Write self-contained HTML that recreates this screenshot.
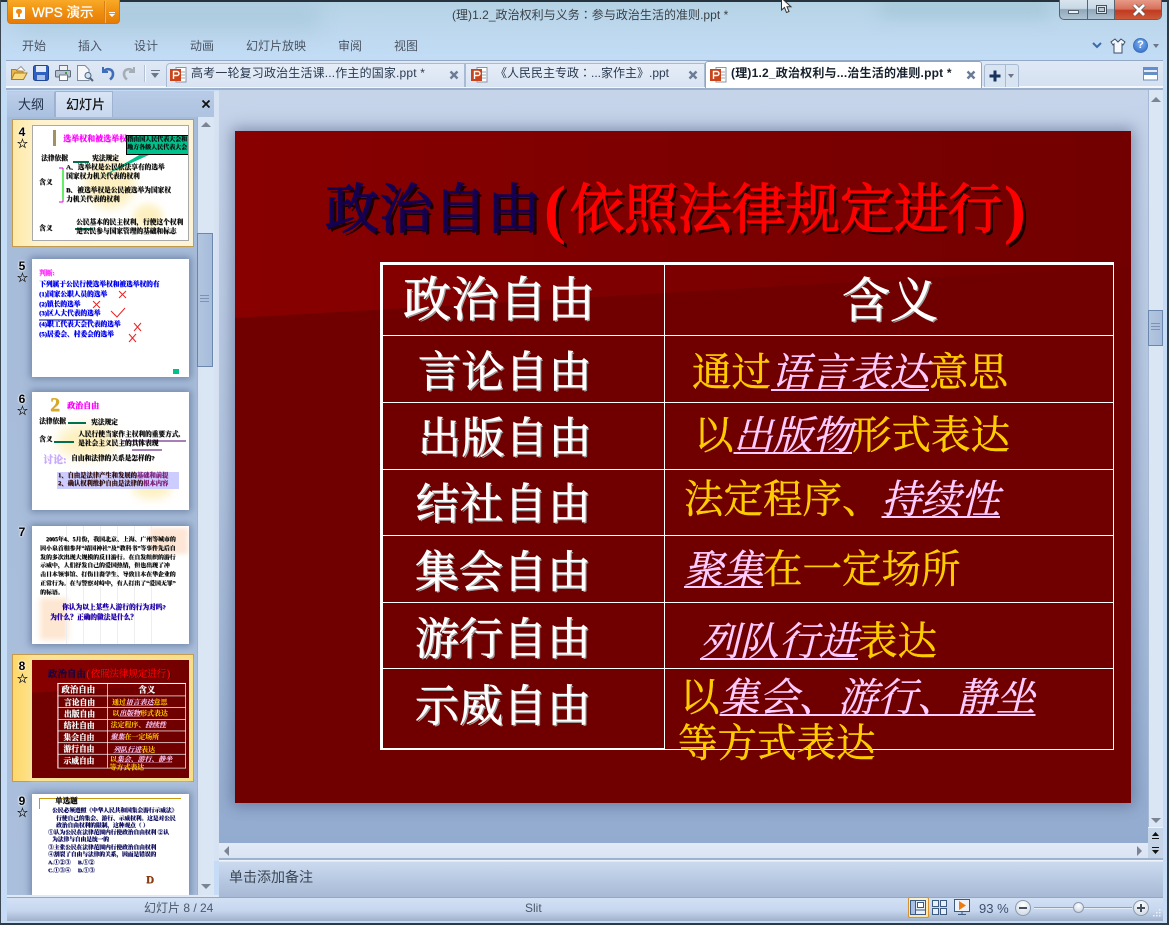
<!DOCTYPE html>
<html><head><meta charset="utf-8"><style>
html,body{margin:0;padding:0}
body{width:1169px;height:925px;overflow:hidden;position:relative;background:#bcd6ec;font-family:"Liberation Sans","Noto Sans CJK SC",sans-serif;font-size:12px;color:#333}
div,span.a,svg.a{position:absolute}
.t{position:absolute;white-space:nowrap;line-height:1}
.rib{top:40px;color:#4b5563;font-size:12px}
.doc{top:67px;font-size:12px;color:#2a3a50;letter-spacing:.1px;font-family:"Liberation Sans","Noto Sans CJK TC",sans-serif}
.slide{position:absolute;width:896px;height:672px;background:#700000;overflow:hidden;font-family:"Liberation Serif","Noto Serif CJK SC",serif}
.slide .l{position:absolute;background:#fff}
.slide .tt{font-size:54px;font-weight:400;-webkit-text-stroke:1.3px currentColor;text-shadow:3px 3px 0 #1c0000}
.slide .pp{font-size:66px;font-weight:bold;color:#f00;text-shadow:3px 3px 0 #1c0000}
.lab{color:#fff;font-weight:400;-webkit-text-stroke:.7px #fff;text-shadow:1.500px 1.500px 0 #a0a0a0}
.yel{color:#ffcc00;font-size:39.5px;-webkit-text-stroke:.4px currentColor}
.yel i{color:#ffccff;text-decoration:underline;text-decoration-thickness:2px;text-underline-offset:3px}
.thumb{position:absolute;left:32px;width:157px;height:118px;background:#fff;box-shadow:0 0 7px 2px rgba(70,90,130,.55);overflow:hidden}
.thumb>.t{font-weight:bold;font-size:6.700px;color:#111;font-family:"Liberation Serif","Noto Serif CJK SC",serif;text-shadow:.4px .3px 0 currentColor}
.num{position:absolute;left:16px;width:12px;text-align:center;font:bold 11px/12px "Liberation Sans",sans-serif;color:#000;text-shadow:0 0 2px #fff,0 0 2px #fff}
.star{position:absolute;left:16px;width:13px;text-align:center;font:13px/13px "DejaVu Sans",sans-serif;color:#111;-webkit-text-stroke:.3px #111;text-shadow:0 0 1px #fff}
.sel{position:absolute;left:12px;width:182px;box-sizing:border-box;border:1px solid #c39a4e}
</style></head><body>

<!-- window chrome -->
<div style="left:0;top:0;width:1169px;height:925px;background:linear-gradient(180deg,#b5d2e4 0,#bcd7ec 25px,#c3dcf6 58px,#c6dcf6 100%)"></div>
<div style="left:20px;top:2px;width:300px;height:30px;background:rgba(150,185,205,.35);filter:blur(10px)"></div>
<div style="left:880px;top:0;width:170px;height:18px;background:rgba(150,190,205,.5);filter:blur(8px)"></div>
<div style="left:0;top:0;width:1169px;height:2px;background:#27333c"></div>
<div style="left:0;top:0;width:1px;height:925px;background:#3a4650"></div>
<div style="left:1167px;top:0;width:2px;height:925px;background:#2e3a44"></div>
<div style="left:0;top:923px;width:1169px;height:2px;background:#2e3a44"></div>

<!-- WPS button -->
<div style="left:7px;top:0;width:113px;height:24px;border-radius:0 0 4px 4px;background:linear-gradient(#f9a928,#f09010 50%,#e67c06);border:1px solid #c9772a;border-top:0;box-sizing:border-box"></div>
<div style="left:13px;top:7px;width:12px;height:12px;background:#fff"></div>
<div style="left:16px;top:9px;width:6px;height:5px;background:#ee8b10;border-radius:3px"></div>
<div style="left:18px;top:13px;width:2px;height:4px;background:#ee8b10"></div>
<div class="t" style="left:32px;top:6px;color:#fff;font-size:13.500px;-webkit-text-stroke:.3px #fff">WPS 演示</div>
<div style="left:104px;top:1px;width:1px;height:22px;background:#d58018;border-right:1px solid #f7b558"></div>
<div style="left:109px;top:12px;width:6px;height:1px;background:#fff"></div>
<div style="left:109px;top:14px;border:3px solid transparent;border-top:3px solid #fff;border-bottom:0"></div>

<div class="t" style="left:452px;top:9px;font-size:12px;color:#3a3f46;letter-spacing:.03px;font-family:'Liberation Sans','Noto Sans CJK TC',sans-serif">(理)1.2_政治权利与义务：参与政治生活的准则.ppt *</div>

<!-- cursor -->
<svg class="a" style="left:780px;top:0" width="14" height="14"><path d="M1.500 -2V10L4.500 7.500L6.500 12.500L9 11.500L7 6.800H11Z" fill="#fff" stroke="#333" stroke-width="1"/></svg>

<!-- window buttons -->
<div style="left:1059px;top:0;width:103px;height:20px;border:1px solid #59636e;border-top:0;border-radius:0 0 5px 5px;box-sizing:border-box;background:linear-gradient(#d8e4ee,#c8d8e6 45%,#8fa7ba 50%,#aec4d4);overflow:hidden">
<div style="left:27px;top:0;width:1px;height:20px;background:#59636e"></div>
<div style="left:54px;top:0;width:1px;height:20px;background:#59636e"></div>
<div style="left:55px;top:0;width:47px;height:20px;background:linear-gradient(#e79a88,#d8705a 45%,#c03a20 52%,#cf5c3c)"></div>
</div>
<div style="left:1068px;top:10px;width:11px;height:4px;background:#e9f0f6;border:1px solid #56636f;box-sizing:border-box"></div>
<div style="left:1096px;top:5px;width:11px;height:9px;border:1px solid #46525e;box-sizing:border-box;background:#dfe8ef"></div>
<div style="left:1098px;top:7px;width:7px;height:5px;border:1px solid #46525e;box-sizing:border-box;background:#b9c9d6"></div>
<svg class="a" style="left:1132px;top:4px" width="14" height="12"><path d="M2 1L12 11M12 1L2 11" stroke="#555" stroke-width="4.200"/><path d="M2 1L12 11M12 1L2 11" stroke="#fff" stroke-width="2.800"/></svg>

<!-- ribbon tabs -->
<div class="t rib" style="left:22px">开始</div>
<div class="t rib" style="left:78px">插入</div>
<div class="t rib" style="left:134px">设计</div>
<div class="t rib" style="left:190px">动画</div>
<div class="t rib" style="left:246px">幻灯片放映</div>
<div class="t rib" style="left:338px">审阅</div>
<div class="t rib" style="left:394px">视图</div>
<svg class="a" style="left:1091px;top:41px" width="12" height="9"><path d="M2 2L6 6L10 2" stroke="#3c6aa8" stroke-width="2" fill="none"/></svg>
<svg class="a" style="left:1110px;top:38px" width="16" height="16"><path d="M5 1L1 4L3 7L4 6V15H12V6L13 7L15 4L11 1L8 4Z" fill="#f4f7fb" stroke="#3a4f6c" stroke-width="1"/></svg>
<div style="left:1133px;top:38px;width:13px;height:13px;border-radius:50%;background:radial-gradient(circle at 50% 35%,#7fb0ee,#2a68c8);border:1px solid #3d72bb;color:#fff;font:bold 11px/13px 'Liberation Sans';text-align:center">?</div>
<div style="left:1153px;top:44px;border:3px solid transparent;border-top:4px solid #6a7686;border-bottom:0"></div>

<!-- toolbar / tab strip -->
<div style="left:6px;top:60px;width:1157px;height:30px;box-sizing:border-box;background:linear-gradient(#dfe8f5,#d4e0f0);border-top:1px solid #92a8c6;border-bottom:2px solid #9cb0cc"></div>
<div style="left:6px;top:86px;width:1157px;height:2px;background:#f4f7fc"></div>
<svg class="a" style="left:10px;top:65px" width="18" height="16"><path d="M1.500 14.500V4.500H6L7 6H13V14.500Z" fill="#e8b64c" stroke="#a97f22"/><path d="M1.500 14.500L4.500 8H17L13.500 14.500Z" fill="#f8d97d" stroke="#a97f22"/><path d="M7 5L11 1.500L15 6" fill="#fff" stroke="#999"/></svg>
<svg class="a" style="left:33px;top:65px" width="17" height="16"><rect x=".5" y=".5" width="15" height="15" rx="2" fill="#2f62c0" stroke="#1e4696"/><rect x="3" y="1" width="10" height="6" fill="#dfe9f8"/><rect x="4" y="10" width="8" height="5" fill="#a9c0e8"/></svg>
<svg class="a" style="left:55px;top:65px" width="17" height="16"><rect x="4.500" y=".5" width="8" height="5" fill="#eef2f7" stroke="#6b7787"/><rect x=".5" y="5.500" width="15" height="6.500" rx="1" fill="#b7c3d2" stroke="#5d6a7a"/><rect x="4.500" y="10" width="8" height="5.500" fill="#fff" stroke="#6b7787"/><rect x="10" y="7" width="2" height="2" fill="#3aa03a"/></svg>
<svg class="a" style="left:77px;top:65px" width="17" height="17"><path d="M.5 .5H8L12 4.500V15.500H.5Z" fill="#f4f6fa" stroke="#7f8b9b"/><circle cx="11" cy="10.500" r="3" fill="#cfe2f5" stroke="#51647c"/><path d="M13 13L16 16" stroke="#51647c" stroke-width="2"/></svg>
<svg class="a" style="left:100px;top:65px" width="15" height="16"><path d="M3 2V7H8" fill="none" stroke="#3e6eb8" stroke-width="2"/><path d="M3.500 6.500C7 2.500 13 4 13 9C13 11 12 13 10 14.500" fill="none" stroke="#3e6eb8" stroke-width="2.600"/></svg>
<svg class="a" style="left:122px;top:65px" width="15" height="16"><path d="M12 2V7H7" fill="none" stroke="#a6aeb5" stroke-width="2"/><path d="M11.500 6.500C8 2.500 2 4 2 9C2 11 3 13 5 14.500" fill="none" stroke="#a6aeb5" stroke-width="2.600"/></svg>
<div style="left:144px;top:65px;width:1px;height:17px;background:#b5c2d4;border-right:1px solid #f5f8fc"></div>
<div style="left:151px;top:70px;width:9px;height:1px;background:#6b7686"></div>
<div style="left:151px;top:73px;border:4px solid transparent;border-top:5px solid #6b7686;border-bottom:0;border-left-width:4.500px;border-right-width:4.500px"></div>

<!-- doc tabs -->
<div style="left:166px;top:63px;width:299px;height:24px;box-sizing:border-box;border:1px solid #a9bbd3;border-bottom:0;border-radius:4px 0 0 0;background:linear-gradient(#e6edf8,#d8e3f2)"></div>
<div style="left:465px;top:63px;width:240px;height:24px;box-sizing:border-box;border:1px solid #a9bbd3;border-bottom:0;background:linear-gradient(#e6edf8,#d8e3f2)"></div>
<div style="left:705px;top:61px;width:277px;height:27px;box-sizing:border-box;border:1px solid #8ea6c6;border-bottom:0;border-radius:3px 3px 0 0;background:#fff"></div>
<div style="left:984px;top:64px;width:35px;height:23px;box-sizing:border-box;border:1px solid #a9bbd3;border-bottom:0;border-radius:3px 3px 0 0;background:#d9e4f3"></div>
<div style="left:1005px;top:65px;width:1px;height:22px;background:#a9bbd3"></div>
<!-- p icons -->
<svg class="a" style="left:170px;top:67px" width="17" height="16"><rect x="6" y=".5" width="10" height="14.500" fill="#fff" stroke="#8a94a2"/><path d="M11 5H15M11 8H15M11 11H15" stroke="#9aa5b3"/><rect x="0" y="2" width="11" height="12" fill="#c9441a"/><path d="M3.500 12V4.500H7A2 2 0 0 1 7 8.500H3.500" fill="none" stroke="#fff" stroke-width="1.400"/></svg>
<svg class="a" style="left:471px;top:67px" width="17" height="16"><rect x="6" y=".5" width="10" height="14.500" fill="#fff" stroke="#8a94a2"/><path d="M11 5H15M11 8H15M11 11H15" stroke="#9aa5b3"/><rect x="0" y="2" width="11" height="12" fill="#c9441a"/><path d="M3.500 12V4.500H7A2 2 0 0 1 7 8.500H3.500" fill="none" stroke="#fff" stroke-width="1.400"/></svg>
<svg class="a" style="left:710px;top:67px" width="17" height="16"><rect x="6" y=".5" width="10" height="14.500" fill="#fff" stroke="#8a94a2"/><path d="M11 5H15M11 8H15M11 11H15" stroke="#9aa5b3"/><rect x="0" y="2" width="11" height="12" fill="#c9441a"/><path d="M3.500 12V4.500H7A2 2 0 0 1 7 8.500H3.500" fill="none" stroke="#fff" stroke-width="1.400"/></svg>
<div class="t doc" style="left:191px;letter-spacing:.16px">高考一轮复习政治生活课...作主的国家.ppt *</div>
<div class="t doc" style="left:495px;letter-spacing:0">《人民民主专政：...家作主》.ppt</div>
<div class="t doc" style="left:731px;font-weight:bold;color:#16202c;letter-spacing:.2px">(理)1.2_政治权利与...治生活的准则.ppt *</div>
<svg class="a" style="left:449px;top:70px" width="10" height="10"><path d="M1.500 1.500L8.500 8.500M8.500 1.500L1.500 8.500" stroke="#6b7c96" stroke-width="2.400"/></svg>
<svg class="a" style="left:688px;top:70px" width="10" height="10"><path d="M1.500 1.500L8.500 8.500M8.500 1.500L1.500 8.500" stroke="#6b7c96" stroke-width="2.400"/></svg>
<svg class="a" style="left:966px;top:70px" width="10" height="10"><path d="M1.500 1.500L8.500 8.500M8.500 1.500L1.500 8.500" stroke="#6b7c96" stroke-width="2.400"/></svg>
<svg class="a" style="left:988px;top:69px" width="14" height="14"><path d="M7 1.500V12.500M1.500 7H12.500" stroke="#17345f" stroke-width="3"/></svg>
<div style="left:1008px;top:74px;border:3px solid transparent;border-top:4px solid #6b7686;border-bottom:0"></div>
<svg class="a" style="left:1143px;top:67px" width="16" height="14"><rect x=".5" y=".5" width="14" height="7" fill="#e5edf8" stroke="#6f8db6"/><rect x=".5" y="1" width="14" height="2" fill="#5f8fd0"/><rect x=".5" y="5.500" width="14" height="7.500" fill="#fff" stroke="#6f8db6"/><rect x="1" y="6" width="13" height="2" fill="#5f8fd0"/></svg>

<!-- left pane -->
<div style="left:7px;top:91px;width:207px;height:26px;background:linear-gradient(#b8cbe7,#aec3e0)"></div>
<div style="left:7px;top:92px;width:47px;height:25px;background:linear-gradient(#bdcfe9,#a9c0df);border-right:1px solid #9bb1cf"></div>
<div style="left:55px;top:91px;width:58px;height:26px;box-sizing:border-box;background:linear-gradient(#d9e5f5,#c7d7ee);border:1px solid #9db3d1;border-bottom:0"></div>
<div class="t" style="left:18px;top:98px;font-size:13px;color:#20304a">大纲</div>
<div class="t" style="left:66px;top:98px;font-size:13px;color:#111;font-weight:500">幻灯片</div>
<svg class="a" style="left:201px;top:99px" width="10" height="10"><path d="M1.500 1.500L8.500 8.500M8.500 1.500L1.500 8.500" stroke="#111" stroke-width="1.800"/></svg>
<div style="left:7px;top:117px;width:190px;height:778px;background:linear-gradient(#a6bbd8,#aabfdc);overflow:hidden"></div>
<div style="left:214px;top:91px;width:5px;height:770px;background:#d7e3f3"></div>

<!-- left scrollbar -->
<div style="left:197px;top:117px;width:17px;height:778px;background:#dbe6f4;border-left:1px solid #9fb4d0;box-sizing:border-box"></div>
<div style="left:201px;top:122px;border:5px solid transparent;border-bottom:5px solid #7a8494;border-top:0;border-left-width:5px"></div>
<div style="left:197px;top:233px;width:16px;height:134px;box-sizing:border-box;border:1px solid #6c87ad;background:linear-gradient(90deg,#b3c6e0,#a6bcda)"></div>
<div style="left:200px;top:295px;width:9px;height:1px;background:#7c93b5;box-shadow:0 3px 0 #7c93b5,0 6px 0 #7c93b5"></div>
<div style="left:201px;top:884px;border:5px solid transparent;border-top:5px solid #7a8494;border-bottom:0"></div>

<!-- slide 4 -->
<div class="sel" style="top:119px;height:128px;background:linear-gradient(90deg,#fde9a4,#fff3cf 15%,#fdf4d6)"></div>
<div class="num" style="top:126px;font-size:12px">4</div><div class="star" style="top:138px">☆</div>
<div class="thumb" style="top:125px;height:116px;box-shadow:none;border:1px solid #a9a9a9;box-sizing:border-box">
 <div style="left:52px;top:33px;width:50px;height:50px;background:#fdf0c0;border-radius:50%;filter:blur(5px)"></div>
 <div style="left:100px;top:78px;width:30px;height:25px;background:#fdf0c0;border-radius:50%;filter:blur(4px)"></div>
 <div style="left:20px;top:4px;width:3px;height:16px;background:#a59060"></div>
 <div class="t" style="left:30px;top:9px;font-size:8px;color:#ff00ff">选举权和被选举权</div>
 <svg class="a" style="left:0;top:0" width="157" height="116"><path d="M108 28L70 50L118 28Z" fill="#00c08c"/><path d="M30 42V76M30 42H26M30 76H26" stroke="#e000e0" fill="none"/><path d="M30 44V74" stroke="#66ee66" stroke-width="2"/><path d="M40 36H56M42 103H60" stroke="#007050" stroke-width="2"/></svg>
 <div style="left:93px;top:9px;width:64px;height:20px;background:#00c08c;border:1px solid #000;box-sizing:border-box"></div>
 <div class="t" style="left:94px;top:11px;font-size:6px">指由国人民代表大会和</div>
 <div class="t" style="left:94px;top:19px;font-size:6px">地方各级人民代表大会</div>
 <div class="t" style="left:8px;top:30px">法律依据</div><div class="t" style="left:59px;top:30px">宪法规定</div>
 <div class="t" style="left:33px;top:39px">A．选举权是公民依法享有的选举</div>
 <div class="t" style="left:33px;top:48px">国家权力机关代表的权利</div>
 <div class="t" style="left:6px;top:54px">含义</div>
 <div class="t" style="left:33px;top:62px">B．被选举权是公民被选举为国家权</div>
 <div class="t" style="left:33px;top:71px">力机关代表的权利</div>
 <div class="t" style="left:6px;top:100px">含义</div>
 <div class="t" style="left:43px;top:94px">公民基本的民主权利，行使这个权利</div>
 <div class="t" style="left:43px;top:103px">是公民参与国家管理的基础和标志</div>
</div>

<!-- slide 5 -->
<div class="num" style="top:260px;font-size:12px">5</div><div class="star" style="top:272px">☆</div>
<div class="thumb" style="top:259px">
 <div class="t" style="left:7px;top:12px;color:#ff33ff">判断:</div>
 <div class="t" style="left:7px;top:23px;color:#0000ee">下列属于公民行使选举权和被选举权的有</div>
 <div class="t" style="left:7px;top:33px;color:#0000ee">(1)国家公职人员的选举</div>
 <div class="t" style="left:7px;top:43px;color:#0000ee">(2)镇长的选举</div>
 <div class="t" style="left:7px;top:52px;color:#0000ee">(3)区人大代表的选举</div>
 <div class="t" style="left:7px;top:63px;color:#0000ee">(4)职工代表大会代表的选举</div>
 <div class="t" style="left:7px;top:73px;color:#0000ee">(5)居委会、村委会的选举</div>
 <svg class="a" style="left:0;top:0" width="157" height="118"><path d="M87 32L94 39M94 32L87 39M61 42L68 49M68 42L61 49M102 64L109 72M109 64L102 72M97 75L104 83M104 75L97 83" stroke="#ee2222" fill="none"/><path d="M79 52L85 58L93 49" stroke="#ee2222" fill="none"/><path d="M7 61H60" stroke="#0000aa"/></svg>
 <div style="left:141px;top:110px;width:6px;height:5px;background:#00c08c"></div>
</div>

<!-- slide 6 -->
<div class="num" style="top:393px;font-size:12px">6</div><div class="star" style="top:405px">☆</div>
<div class="thumb" style="top:392px">
 <div style="left:25px;top:32px;width:60px;height:35px;background:#fdf0c0;border-radius:50%;filter:blur(6px)"></div>
 <div style="left:100px;top:82px;width:40px;height:25px;background:#fdf0c0;border-radius:50%;filter:blur(5px)"></div>
 <div class="t" style="left:18px;top:3px;font-size:20px;color:#d8a828">2</div>
 <div class="t" style="left:35px;top:10px;font-size:8px;color:#ff00ff">政治自由</div>
 <svg class="a" style="left:0;top:0" width="157" height="118"><path d="M36 31H54M22 50H42" stroke="#007050" stroke-width="2"/><path d="M90 49H154M100 58H130" stroke="#500070"/></svg>
 <div class="t" style="left:7px;top:27px">法律依据</div><div class="t" style="left:59px;top:28px">宪法规定</div>
 <div class="t" style="left:7px;top:45px">含义</div>
 <div class="t" style="left:46px;top:40px">人民行使当家作主权利的重要方式,</div>
 <div class="t" style="left:46px;top:49px">是社会主义民主的具体表现</div>
 <div class="t" style="left:11px;top:64px;font-size:10px;color:#c8aaff">讨论:</div>
 <div class="t" style="left:39px;top:64px">自由和法律的关系是怎样的?</div>
 <div style="left:25px;top:80px;width:122px;height:17px;background:#ccccff"></div>
 <div class="t" style="left:26px;top:81px;font-size:6.300px;color:#311">1、自由是法律产生和发展的<span style="color:#80207a">基础和前提</span></div>
 <div class="t" style="left:26px;top:89px;font-size:6.300px;color:#311">2、确认权利维护自由是法律的<span style="color:#80207a">根本内容</span></div>
</div>

<!-- slide 7 -->
<div class="num" style="top:526px;font-size:12px">7</div>
<div class="thumb" style="top:526px">
 <div style="left:118px;top:2px;width:38px;height:26px;background:#fde6d6;filter:blur(2px)"></div>
 <div style="left:8px;top:72px;width:28px;height:42px;background:#fde6d2;filter:blur(3px)"></div>
 <div style="left:34px;top:0;width:90px;height:118px;background:repeating-linear-gradient(90deg,#eee 0,#eee 1px,transparent 1px,transparent 17px)"></div>
 <div class="t" style="left:14px;top:12px;font-size:5.900px">2005年4、5月份，我国北京、上海、广州等城市的</div>
 <div class="t" style="left:8px;top:21px;font-size:5.900px">因小泉首相参拜“靖国神社”及“教科书”等事件先后自</div>
 <div class="t" style="left:8px;top:30px;font-size:5.900px">发的多次出现大规模的反日游行。在自发组织的游行</div>
 <div class="t" style="left:8px;top:38px;font-size:5.900px">示威中，人们抒发自己的爱国热情，但也出现了冲</div>
 <div class="t" style="left:8px;top:47px;font-size:5.900px">击日本领事馆、打伤日裔学生、导致日本在华企业的</div>
 <div class="t" style="left:8px;top:56px;font-size:5.900px">正常行为。在与警察对峙中，有人打出了“爱国无罪”</div>
 <div class="t" style="left:8px;top:65px;font-size:5.900px">的标语。</div>
 <div class="t" style="left:30px;top:79px;color:#2200aa">你认为以上某些人游行的行为对吗?</div>
 <div class="t" style="left:18px;top:89px;color:#2200aa">为什么？正确的做法是什么？</div>
</div>

<!-- slide 8 -->
<div class="sel" style="top:654px;height:128px;background:linear-gradient(90deg,#fdd76a,#fee48d 12%,#f9dc7a)"></div>
<div class="num" style="top:660px;font-size:12px">8</div><div class="star" style="top:673px">☆</div>
<div class="thumb" style="top:660px;box-shadow:0 0 4px 2px #f2e2a0;background:#700000">
<div class="slide" style="left:0;top:0;transform:scale(.1752);transform-origin:0 0">
 <div style="left:0;top:0;width:896px;height:190px;background:linear-gradient(90deg,#880000,#720000);clip-path:polygon(0 0,100% 0,100% 135px,0 187px)"></div>
 <div class="t tt" style="left:90px;top:52px;color:#150050">政治自由</div>
 <div class="t pp" style="left:309px;top:46px">(</div>
 <div class="t tt" style="left:335px;top:52px;color:#f00">依照法律规定进行</div>
 <div class="t pp" style="left:769px;top:46px">)</div>
 <div class="l" style="left:145px;top:131px;width:734px;height:6px"></div><div class="l" style="left:145px;top:131px;width:6px;height:487px"></div>
 <div class="l" style="left:429px;top:131px;width:4px;height:487px"></div><div class="l" style="left:875px;top:131px;width:4px;height:487px"></div>
 <div class="l" style="left:145px;top:203px;width:734px;height:4px"></div><div class="l" style="left:145px;top:270px;width:734px;height:4px"></div><div class="l" style="left:145px;top:337px;width:734px;height:4px"></div><div class="l" style="left:145px;top:403px;width:734px;height:4px"></div><div class="l" style="left:145px;top:470px;width:734px;height:4px"></div><div class="l" style="left:145px;top:536px;width:734px;height:4px"></div><div class="l" style="left:145px;top:615px;width:734px;height:4px"></div>
 <div class="t lab" style="left:168px;top:146px;font-size:48px;font-weight:bold">政治自由</div>
 <div class="t lab" style="left:607px;top:147px;font-size:48px;font-weight:bold">含义</div>
 <div class="t lab" style="left:183px;top:221px;font-size:44px;font-weight:bold">言论自由</div>
 <div class="t lab" style="left:183px;top:287px;font-size:44px;font-weight:bold">出版自由</div>
 <div class="t lab" style="left:181px;top:353px;font-size:44px;font-weight:bold">结社自由</div>
 <div class="t lab" style="left:180px;top:420px;font-size:44px;font-weight:bold">集会自由</div>
 <div class="t lab" style="left:180px;top:487px;font-size:44px;font-weight:bold">游行自由</div>
 <div class="t lab" style="left:180px;top:554px;font-size:44px;font-weight:bold">示威自由</div>
 <div class="t yel" style="left:457px;top:223px;font-weight:bold">通过<i>语言表达</i>意思</div>
 <div class="t yel" style="left:459px;top:286px;font-weight:bold">以<i>出版物</i>形式表达</div>
 <div class="t yel" style="left:449px;top:350px;font-weight:bold">法定程序、<i>持续性</i></div>
 <div class="t yel" style="left:449px;top:420px;font-weight:bold"><i>聚集</i>在一定场所</div>
 <div class="t yel" style="left:465px;top:492px;font-weight:bold"><i>列队行进</i>表达</div>
 <div class="t yel" style="left:445px;top:548px;font-weight:bold">以<i>集会、游行、静坐</i></div>
 <div class="t yel" style="left:443px;top:594px;font-weight:bold">等方式表达</div>
</div></div>

<!-- slide 9 -->
<div class="num" style="top:795px;font-size:12px">9</div><div class="star" style="top:807px">☆</div>
<div class="thumb" style="top:794px;height:101px">
 <div style="left:7px;top:4px;width:142px;height:1px;background:#c99a10"></div><div style="left:7px;top:4px;width:1px;height:11px;background:#c99a10"></div>
 <div class="t" style="left:23px;top:3px;font-size:7.500px">单选题</div>
 <div class="t" style="left:20px;top:15px;color:#101060;font-size:5.700px">公民必须遵照《中华人民共和国集会游行示威法》</div>
 <div class="t" style="left:24px;top:23px;color:#101060;font-size:5.700px">行使自己的集会、游行、示威权利。这是对公民</div>
 <div class="t" style="left:24px;top:30px;color:#101060;font-size:5.700px">政治自由权利的限制，这种观点（  ）</div>
 <div class="t" style="left:16px;top:37px;color:#101060;font-size:5.700px">①认为公民在法律范围内行使政治自由权利 ②认</div>
 <div class="t" style="left:20px;top:44px;color:#101060;font-size:5.700px">为法律与自由是统一的</div>
 <div class="t" style="left:16px;top:52px;color:#101060;font-size:5.700px">③主张公民在法律范围内行使政治自由权利</div>
 <div class="t" style="left:16px;top:59px;color:#101060;font-size:5.700px">④割裂了自由与法律的关系，因而是错误的</div>
 <div class="t" style="left:16px;top:67px;color:#101060;font-size:5.700px">A.①②③　 B.①②</div>
 <div class="t" style="left:16px;top:75px;color:#101060;font-size:5.700px">C.①③④ 　D.①③</div>
 <div class="t" style="left:114px;top:81px;font-size:11px;color:#8a3a10">D</div>
</div>
<div style="left:7px;top:895px;width:1156px;height:2px;background:#dfe8f5"></div>

<!-- main area -->
<div style="left:219px;top:90px;width:929px;height:753px;background:linear-gradient(#c6d4ea,#b2c5e0 50%,#92abcf)"></div>
<div class="slide" style="left:235px;top:131px;box-shadow:0 0 14px 3px rgba(50,65,105,.45)">
 <div style="left:0;top:0;width:896px;height:190px;background:linear-gradient(90deg,#880000,#720000);clip-path:polygon(0 0,100% 0,100% 135px,0 187px)"></div>
 <div class="t tt" style="left:90px;top:52px;color:#150050">政治自由</div>
 <div class="t pp" style="left:309px;top:46px">(</div>
 <div class="t tt" style="left:335px;top:52px;color:#f00">依照法律规定进行</div>
 <div class="t pp" style="left:769px;top:46px">)</div>
 <div class="l" style="left:145px;top:131px;width:734px;height:3px"></div>
 <div class="l" style="left:145px;top:131px;width:3px;height:488px"></div>
 <div class="l" style="left:429px;top:131px;width:1px;height:488px"></div>
 <div class="l" style="left:878px;top:131px;width:1px;height:488px"></div>
 <div class="l" style="left:145px;top:204px;width:734px;height:1px"></div>
 <div class="l" style="left:145px;top:271px;width:734px;height:1px"></div>
 <div class="l" style="left:145px;top:338px;width:734px;height:1px"></div>
 <div class="l" style="left:145px;top:404px;width:734px;height:1px"></div>
 <div class="l" style="left:145px;top:471px;width:734px;height:1px"></div>
 <div class="l" style="left:145px;top:537px;width:734px;height:1px"></div>
 <div class="l" style="left:145px;top:617px;width:285px;height:2px"></div>
 <div class="l" style="left:430px;top:618px;width:449px;height:1px"></div>
 <div class="t lab" style="left:168px;top:146px;font-size:48px">政治自由</div>
 <div class="t lab" style="left:607px;top:147px;font-size:48px">含义</div>
 <div class="t lab" style="left:183px;top:221px;font-size:43px;letter-spacing:.5px">言论自由</div>
 <div class="t lab" style="left:183px;top:287px;font-size:43px;letter-spacing:.5px">出版自由</div>
 <div class="t lab" style="left:181px;top:353px;font-size:43px;letter-spacing:1px">结社自由</div>
 <div class="t lab" style="left:180px;top:420px;font-size:44px">集会自由</div>
 <div class="t lab" style="left:180px;top:487px;font-size:44px">游行自由</div>
 <div class="t lab" style="left:180px;top:554px;font-size:44px">示威自由</div>
 <div class="t yel" style="left:457px;top:223px">通过<i>语言表达</i>意思</div>
 <div class="t yel" style="left:459px;top:286px">以<i>出版物</i>形式表达</div>
 <div class="t yel" style="left:449px;top:350px">法定程序、<i>持续性</i></div>
 <div class="t yel" style="left:449px;top:420px"><i>聚集</i>在一定场所</div>
 <div class="t yel" style="left:465px;top:492px"><i>列队行进</i>表达</div>
 <div class="t yel" style="left:445px;top:548px">以<i>集会、游行、静坐</i></div>
 <div class="t yel" style="left:443px;top:594px">等方式表达</div>
</div>

<!-- main v scrollbar -->
<div style="left:1148px;top:90px;width:15px;height:770px;background:#dbe6f4;border-left:1px solid #a5b9d4;box-sizing:border-box"></div>
<div style="left:1151px;top:97px;border:5px solid transparent;border-bottom:5px solid #7a8494;border-top:0"></div>
<div style="left:1148px;top:310px;width:15px;height:36px;box-sizing:border-box;border:1px solid #6c87ad;background:linear-gradient(90deg,#b3c6e0,#a6bcda)"></div>
<div style="left:1151px;top:323px;width:9px;height:1px;background:#7c93b5;box-shadow:0 3px 0 #7c93b5,0 6px 0 #7c93b5"></div>
<div style="left:1151px;top:818px;border:5px solid transparent;border-top:5px solid #7a8494;border-bottom:0"></div>
<div style="left:1148px;top:827px;width:15px;height:31px;background:#c6d4e8;border-top:1px solid #eef3fa;box-sizing:border-box"></div>
<svg class="a" style="left:1150px;top:830px" width="11" height="26"><path d="M5.500 2L9 6H2Z M2 8H9V9H2Z M2 17H9V18H2Z M2 20H9L5.500 24Z" fill="#111"/></svg>

<!-- h scrollbar -->
<div style="left:219px;top:843px;width:929px;height:15px;background:linear-gradient(#e2eaf6,#d9e4f3)"></div>
<div style="left:224px;top:846px;border:5px solid transparent;border-right:5px solid #7a8494;border-left:0"></div>
<div style="left:1137px;top:846px;border:5px solid transparent;border-left:5px solid #7a8494;border-right:0"></div>

<!-- notes -->
<div style="left:219px;top:858px;width:944px;height:39px;box-sizing:border-box;border-top:2px solid #9db2cf;background:linear-gradient(#f0f4fa 0,#f0f4fa 1px,#ccdaef 2px,#b9cae3 50%,#a7b9d4)"></div>
<div class="t" style="left:229px;top:870px;font-size:14px;color:#3c4654">单击添加备注</div>

<!-- status -->
<div style="left:7px;top:897px;width:1156px;height:24px;box-sizing:border-box;border-top:1px solid #92a8c6;background:linear-gradient(#d3e1f5,#c6d6ee 55%,#9fb1cb)"></div>
<div class="t" style="left:144px;top:902px;font-size:12px;color:#4b5868">幻灯片 8 / 24</div>
<div class="t" style="left:525px;top:902px;font-size:12px;color:#4b5868">Slit</div>
<div style="left:908px;top:897px;width:21px;height:21px;box-sizing:border-box;border:1px solid #d8912c;border-radius:2px;background:linear-gradient(#fff3cc,#fbe6a8)"></div>
<svg class="a" style="left:910px;top:900px" width="17" height="16"><rect x=".5" y=".5" width="15" height="14" fill="#e8eff9" stroke="#3d5a80"/><rect x="1" y="1" width="4" height="13" fill="#a9c0e4"/><path d="M5.500 1V14.500M5.500 10H15" stroke="#3d5a80"/><rect x="7.500" y="2.500" width="6" height="5" fill="#fff" stroke="#3d5a80"/></svg>
<svg class="a" style="left:932px;top:900px" width="16" height="16"><rect x=".5" y=".5" width="6" height="6" fill="#e8eff9" stroke="#3d5a80"/><rect x="8.500" y=".5" width="6" height="6" fill="#e8eff9" stroke="#3d5a80"/><rect x=".5" y="8.500" width="6" height="6" fill="#e8eff9" stroke="#3d5a80"/><rect x="8.500" y="8.500" width="6" height="6" fill="#e8eff9" stroke="#3d5a80"/></svg>
<svg class="a" style="left:954px;top:899px" width="17" height="17"><rect x=".5" y=".5" width="15" height="12" fill="#eef3fa" stroke="#3d5a80"/><path d="M5 2V11L12 6.500Z" fill="#ee7a10"/><path d="M4 15.500H12M8 13V15" stroke="#3d5a80"/></svg>
<div class="t" style="left:979px;top:902px;font-size:13px;color:#3d4f6c">93 %</div>
<div style="left:1034px;top:907px;width:98px;height:1px;background:#8fa2bc;box-shadow:0 1px 0 #e5ecf6"></div>
<div style="left:1015px;top:900px;width:16px;height:16px;box-sizing:border-box;border-radius:50%;border:1px solid #8b9ab0;background:radial-gradient(circle at 50% 30%,#fff,#c9d3e0)"></div>
<div style="left:1019px;top:907px;width:8px;height:2px;background:#45505f"></div>
<div style="left:1073px;top:902px;width:11px;height:11px;box-sizing:border-box;border-radius:50%;border:1px solid #8b9ab0;background:radial-gradient(circle at 50% 30%,#fff,#c3cfde)"></div>
<div style="left:1133px;top:900px;width:16px;height:16px;box-sizing:border-box;border-radius:50%;border:1px solid #8b9ab0;background:radial-gradient(circle at 50% 30%,#fff,#c9d3e0)"></div>
<div style="left:1137px;top:907px;width:8px;height:2px;background:#45505f"></div>
<div style="left:1140px;top:904px;width:2px;height:8px;background:#45505f"></div>
<svg class="a" style="left:1152px;top:909px" width="9" height="9"><path d="M7 0h1.500v1.500H7zM4 3h1.500v1.500H4zM7 3h1.500v1.500H7zM1 6h1.500v1.500H1zM4 6h1.500v1.500H4zM7 6h1.500v1.500H7z" fill="#eef3f9"/></svg>
</body></html>
